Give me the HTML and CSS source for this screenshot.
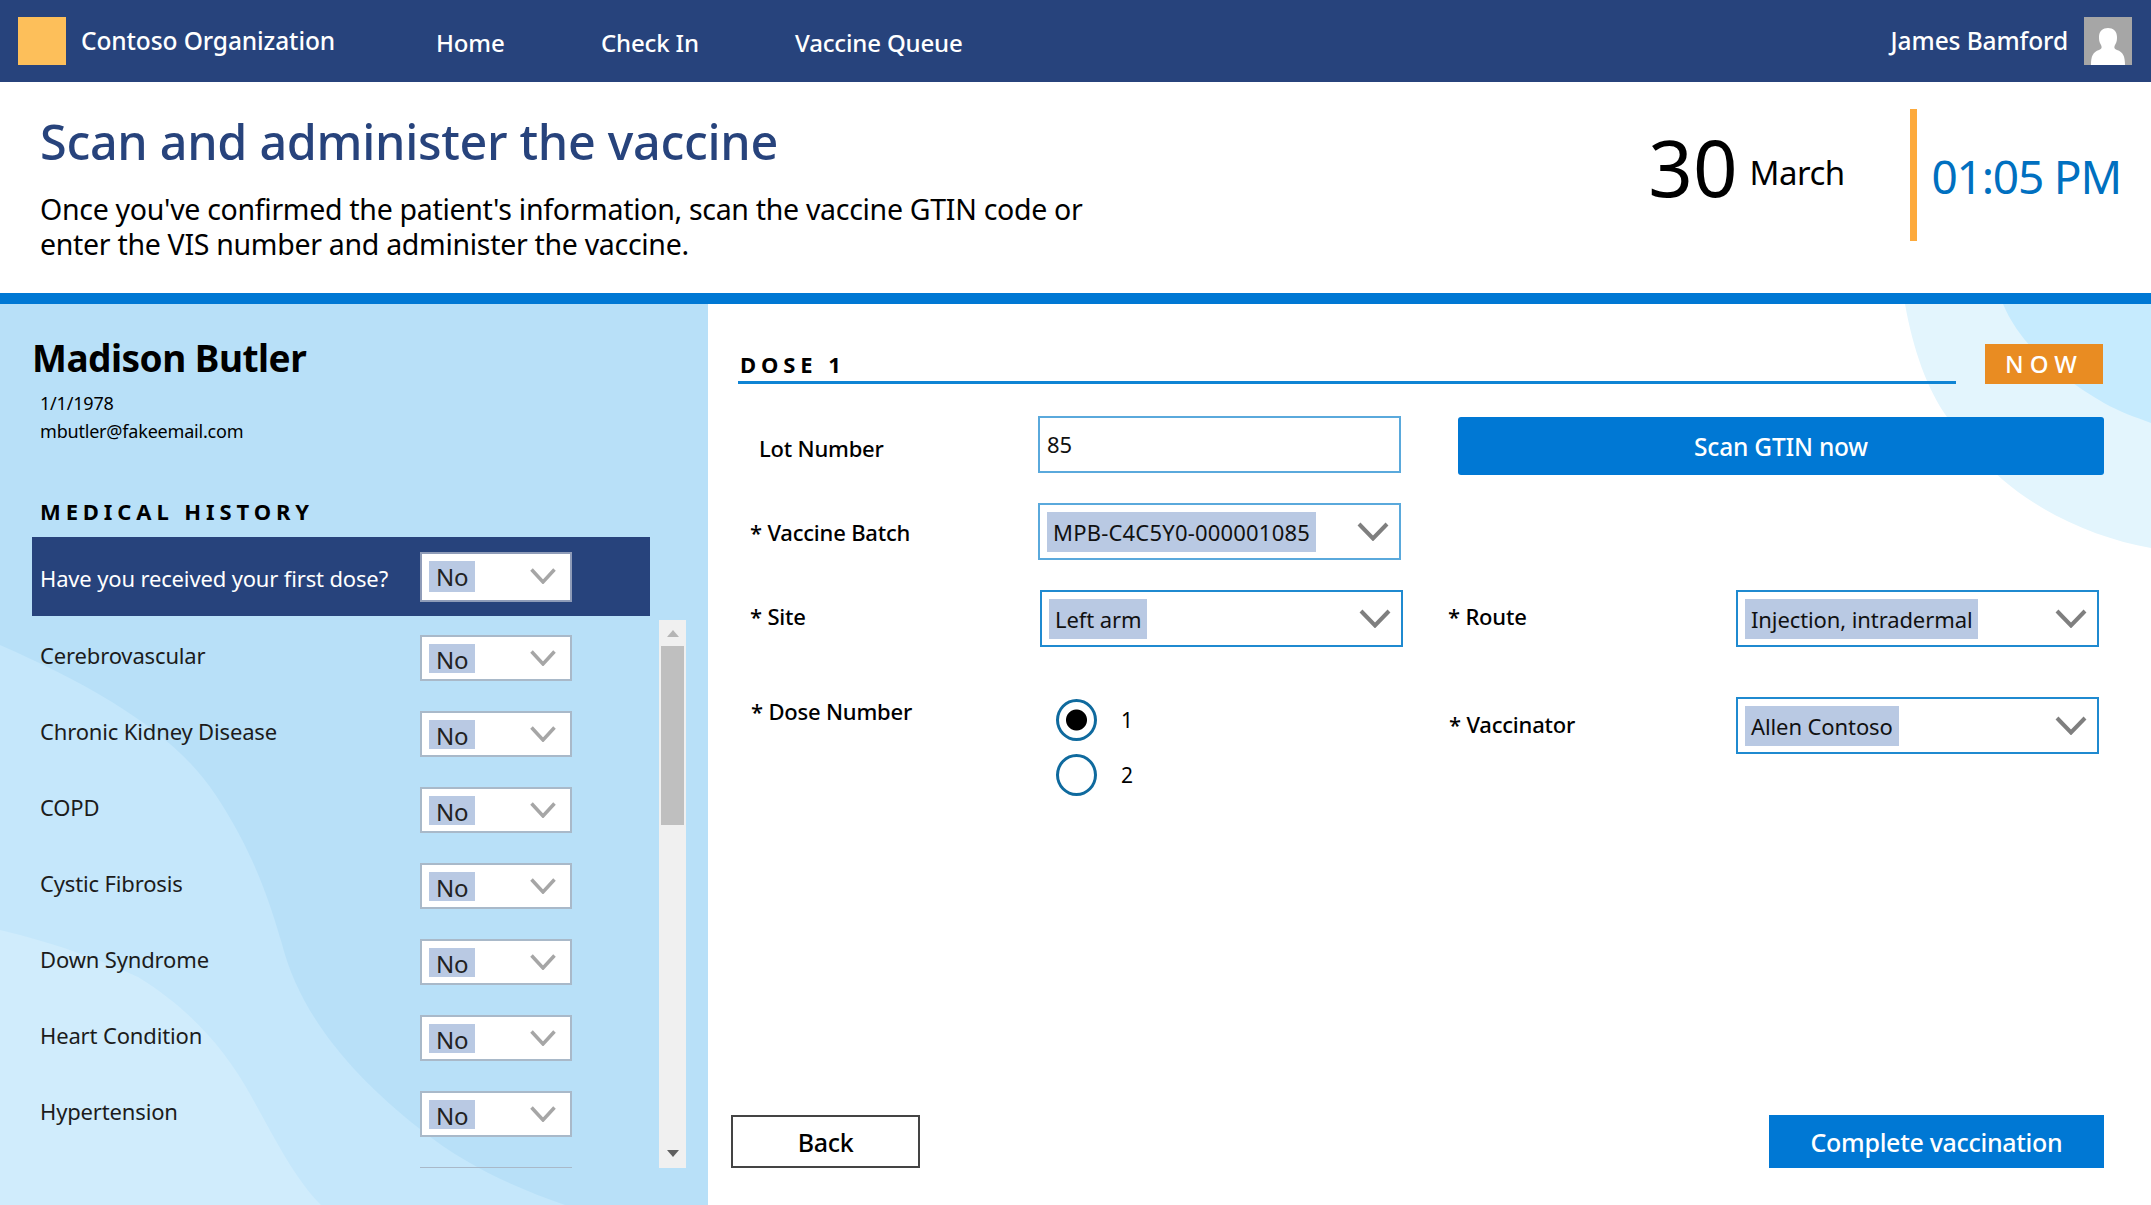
FILE: index.html
```html
<!DOCTYPE html>
<html lang="en">
<head>
  <meta charset="UTF-8">
  <title>Scan and administer the vaccine</title>
  <link rel="stylesheet" href="styles.css">
</head>
<body>
  <!-- Top navigation -->
  <nav class="topnav">
    <div class="logo"></div>
    <div class="org">Contoso Organization</div>
    <a class="navlink home">Home</a>
    <a class="navlink checkin">Check In</a>
    <a class="navlink queue">Vaccine Queue</a>
    <div class="user">James Bamford</div>
    <svg class="avatar" viewBox="0 0 48 48">
      <rect width="48" height="48" fill="#a6a6a6"/>
      <path d="M7 48c0-9 2-13 8-15 3-1 3-3 2-5-2-3-2-6-2-8 0-6 4-9 9-9s9 3 9 9c0 2 0 5-2 8-1 2-1 4 2 5 6 2 8 6 8 15z" fill="#fff"/>
    </svg>
  </nav>

  <!-- Page title -->
  <header class="pagehead">
    <div class="intro">
      <h1>Scan and administer the vaccine</h1>
      <p>Once you've confirmed the patient's information, scan the vaccine GTIN code or<br>enter the VIS number and administer the vaccine.</p>
    </div>
    <div class="when">
      <span class="day">30</span>
      <span class="month">March</span>
      <span class="divider"></span>
      <span class="time">01:05 PM</span>
    </div>
  </header>

  <div class="content">
    <!-- Patient panel -->
    <aside class="patient">
      <svg class="waves" viewBox="0 0 708 901" preserveAspectRatio="none">
        <path d="M0 341C100 385 175 430 215 490C255 550 270 600 282 640C300 710 350 770 420 825C470 865 520 885 565 901H0Z" fill="#c5e7fb"/>
        <path d="M0 626C60 640 110 660 138 673C190 705 225 745 250 790C275 835 295 875 321 901H0Z" fill="#d0ecfc"/>
      </svg>
      <div class="patient-inner">
        <h2>Madison Butler</h2>
        <div class="meta">1/1/1978</div>
        <div class="meta">mbutler@fakeemail.com</div>
        <h3>MEDICAL HISTORY</h3>

        <div class="hrow first">
          <span class="hlabel">Have you received your first dose?</span>
          <div class="mini">
            <span class="chip">No</span>
            <svg class="chev" viewBox="0 0 26 16"><polyline points="1.5,1.5 13,14 24.5,1.5"/></svg>
          </div>
        </div>

        <div class="history">
          <div class="rows" id="rows"></div>
          <div class="scrollbar">
            <span class="arrow up"></span>
            <span class="thumb"></span>
            <span class="arrow down"></span>
          </div>
        </div>
      </div>
    </aside>

    <!-- Dose form -->
    <main class="dose">
      <svg class="blobs" viewBox="0 0 246 246" preserveAspectRatio="none">
        <path d="M0 0C8 45 22 85 42 113C60 140 80 160 98 176C140 212 195 235 246 244V0Z" fill="#e3f5fd"/>
        <path d="M98 0C115 40 150 70 199 99C215 108 230 113 246 119V0Z" fill="#c6ebfe"/>
      </svg>

      <div class="dosehead">
        <div class="dosetitle">DOSE 1</div>
        <div class="now">NOW</div>
      </div>

      <form class="fields">
        <label class="flabel lot">Lot Number</label>
        <input class="lotinput" type="text" value="85">
        <button class="scan" type="button">Scan GTIN now</button>

        <label class="flabel batch">* Vaccine Batch</label>
        <div class="pick">
          <span class="tag code">MPB-C4C5Y0-000001085</span>
          <svg class="chevbig" viewBox="0 0 32 19"><polyline points="2,2 16,16.5 30,2"/></svg>
        </div>

        <label class="flabel site">* Site</label>
        <div class="pick nudged">
          <span class="tag">Left arm</span>
          <svg class="chevbig" viewBox="0 0 32 19"><polyline points="2,2 16,16.5 30,2"/></svg>
        </div>
        <label class="flabel route">* Route</label>
        <div class="pick right">
          <span class="tag">Injection, intradermal</span>
          <svg class="chevbig" viewBox="0 0 32 19"><polyline points="2,2 16,16.5 30,2"/></svg>
        </div>

        <label class="flabel number">* Dose Number</label>
        <div class="radios">
          <label class="radio"><input type="radio" name="dose" checked><span>1</span></label>
          <label class="radio"><input type="radio" name="dose"><span>2</span></label>
        </div>
        <label class="flabel vaccinator">* Vaccinator</label>
        <div class="pick right">
          <span class="tag">Allen Contoso</span>
          <svg class="chevbig" viewBox="0 0 32 19"><polyline points="2,2 16,16.5 30,2"/></svg>
        </div>
      </form>

      <div class="actions">
        <button class="btn back" type="button">Back</button>
        <button class="btn complete" type="button">Complete vaccination</button>
      </div>
    </main>
  </div>

  <script>
    const conditions = ['Cerebrovascular', 'Chronic Kidney Disease', 'COPD', 'Cystic Fibrosis',
      'Down Syndrome', 'Heart Condition', 'Hypertension'];
    const rows = document.getElementById('rows');
    conditions.forEach(name => {
      const row = document.createElement('div');
      row.className = 'hrow';
      row.innerHTML = `
        <span class="hlabel">${name}</span>
        <div class="mini">
          <span class="chip">No</span>
          <svg class="chev" viewBox="0 0 26 16"><polyline points="1.5,1.5 13,14 24.5,1.5"/></svg>
        </div>
      `;
      rows.appendChild(row);
    });
    // next row only just shows above the end of the scroll area
    const nextRow = document.createElement('div');
    nextRow.className = 'hrow';
    nextRow.innerHTML = '<span class="hlabel"></span><div class="mini"></div>';
    rows.appendChild(nextRow);
  </script>
</body>
</html>
```

FILE: styles.css
```css
* {
  box-sizing: border-box;
}
html, body {
  margin: 0;
  height: 100%;
}
body {
  font-family: "Noto Sans", "Open Sans", Arial, sans-serif;
  color: #000;
  background: #fff;
  display: flex;
  flex-direction: column;
  height: 1205px;
  overflow: hidden;
}

/* top nav */
.topnav {
  height: 82px;
  flex: none;
  background: #27437c;
  color: #fff;
  display: flex;
  align-items: center;
  padding: 0 19px 0 18px;
  font-size: 24px;
}
.logo {
  width: 48px;
  height: 48px;
  background: #fdbf5a;
  margin-right: 15px;
}
.org {
  width: 355px;
  font-size: 24.5px;
  font-weight: 500;
  letter-spacing: -0.1px;
  padding-bottom: 1px;
}
.navlink {
  font-weight: 500;
  letter-spacing: -0.15px;
  padding-top: 2px;
}
.home {
  width: 165px;
}
.checkin {
  width: 194px;
}
.user {
  margin-left: auto;
  margin-right: 16px;
  font-size: 24.5px;
  font-weight: 500;
  letter-spacing: -0.1px;
  padding-bottom: 1px;
}
.avatar {
  width: 48px;
  height: 48px;
}

/* page title */
.pagehead {
  height: 211px;
  flex: none;
  display: flex;
  justify-content: space-between;
  padding: 27px 30px 0 40px;
}
h1 {
  margin: 0;
  font-size: 48.5px;
  line-height: 64px;
  font-weight: 500;
  color: #27437c;
  letter-spacing: -0.3px;
}
.intro p {
  margin: 19px 0 0;
  font-size: 28.5px;
  line-height: 35px;
  letter-spacing: -0.3px;
}
.when {
  display: flex;
  align-items: center;
  height: 132px;
}
.day {
  font-size: 78px;
  line-height: 1;
  margin: -16px 12px 0 0;
}
.month {
  font-size: 33px;
  margin-top: -6px;
  letter-spacing: -0.5px;
  width: 160px;
}
.divider {
  width: 7px;
  height: 132px;
  background: #fdaa3c;
  margin-right: 15px;
}
.time {
  font-size: 46px;
  color: #0070c0;
  margin-top: 2px;
  letter-spacing: -1.2px;
}

.content {
  flex: 1;
  display: flex;
  border-top: 11px solid #0078d4;
  min-height: 0;
}

/* patient panel */
.patient {
  position: relative;
  width: 708px;
  flex: none;
  background: #b8e0f8;
  overflow: hidden;
}
.waves {
  position: absolute;
  left: 0;
  top: 0;
  width: 100%;
  height: 100%;
}
.patient-inner {
  position: relative;
  padding: 31px 0 0 32px;
}
h2 {
  margin: 0 0 8px;
  font-size: 37px;
  line-height: 46px;
  font-weight: 700;
  letter-spacing: -0.5px;
}
.meta {
  margin-left: 8px;
  font-size: 18px;
  line-height: 28px;
  letter-spacing: -0.2px;
}
h3 {
  margin: 54px 0 14px 8px;
  font-size: 22px;
  line-height: 24px;
  font-weight: 700;
  letter-spacing: 4.9px;
}
.hrow {
  display: flex;
  align-items: center;
  height: 46px;
  font-size: 22px;
  letter-spacing: -0.15px;
  color: #1c1c1c;
}
.hlabel {
  width: 380px;
  padding-bottom: 6px;
}
.hrow.first {
  width: 618px;
  height: 79px;
  padding-left: 8px;
  background: #27437c;
  color: #fff;
}
.hrow.first .hlabel {
  padding-bottom: 0;
  padding-top: 3px;
}
.mini {
  width: 152px;
  height: 46px;
  flex: none;
  display: flex;
  align-items: center;
  justify-content: space-between;
  padding: 0 14px 0 7px;
  background: #fff;
  border: 2px solid #a9b9c9;
}
.hrow.first .mini {
  height: 50px;
  border: 2px solid #8f9cb8;
}
.chip {
  height: 29px;
  padding: 0 7px;
  background: #b9c9e3;
  color: #222;
  font-size: 24px;
  line-height: 31px;
  letter-spacing: -0.3px;
}
.hrow.first .chip {
  height: 31px;
  line-height: 31px;
}
.chev {
  width: 26px;
  height: 16px;
  margin-top: -1px;
  fill: none;
  stroke: #a6a6a6;
  stroke-width: 3.5;
}
.history {
  display: flex;
  height: 548px;
  margin-top: 4px;
  overflow: hidden;
}
.rows {
  width: 627px;
  padding: 15px 0 0 8px;
  display: flex;
  flex-direction: column;
  gap: 30px;
}
.rows .hrow {
  flex: none;
}
.scrollbar {
  width: 27px;
  background: #f0f0f0;
  display: flex;
  flex-direction: column;
  align-items: center;
}
.arrow {
  width: 0;
  height: 0;
  border-left: 6px solid transparent;
  border-right: 6px solid transparent;
}
.arrow.up {
  border-bottom: 7px solid #b5b5b5;
  margin: 10px 0 9px;
}
.arrow.down {
  border-top: 7px solid #5f5f5f;
  margin-top: auto;
  margin-bottom: 11px;
}
.thumb {
  width: 23px;
  height: 179px;
  background: #bfbfbf;
}

/* dose form */
.dose {
  position: relative;
  flex: 1;
  display: flex;
  flex-direction: column;
  padding: 40px 47px 37px 23px;
}
.blobs {
  position: absolute;
  right: 0;
  top: 0;
  width: 246px;
  height: 246px;
}
.dosehead {
  position: relative;
  display: flex;
  margin-left: 7px;
  height: 40px;
}
.dosetitle {
  width: 1218px;
  margin-right: 29px;
  padding: 7px 0 0 2px;
  border-bottom: 3px solid #0f84d4;
  font-size: 22px;
  line-height: 26px;
  font-weight: 700;
  letter-spacing: 4.9px;
}
.now {
  width: 118px;
  background: #e98c22;
  color: #fff;
  font-size: 24px;
  line-height: 40px;
  text-align: center;
  letter-spacing: 6px;
  font-weight: 500;
}
.fields {
  position: relative;
  margin: 32px 0 0 7px;
  display: grid;
  grid-template-columns: 300px 365px 45px 288px 368px;
  grid-template-rows: 87px 87px 107px auto;
  align-items: start;
}
.flabel {
  grid-column: 1;
  font-size: 22px;
  line-height: 30px;
  letter-spacing: -0.2px;
  font-weight: 500;
  padding-left: 12px;
}
.flabel.lot {
  padding-left: 21px;
  margin-top: 17px;
}
.flabel.batch {
  margin-top: 14px;
}
.flabel.site {
  margin-top: 11px;
}
.flabel.number {
  padding-left: 13px;
  margin-top: -1px;
}
.flabel.route {
  grid-column: 4;
  padding-left: 0;
  margin-top: 11px;
}
.flabel.vaccinator {
  grid-column: 4;
  padding-left: 1px;
  margin-top: 12px;
}
.lotinput {
  grid-column: 2;
  width: 363px;
  height: 57px;
  padding: 0 0 2px 7px;
  border: 2px solid #5aa9dc;
  border-radius: 0;
  background: transparent;
  font-family: inherit;
  font-size: 22px;
  color: #111;
}
.scan {
  grid-column: 4 / 6;
  margin: 1px 0 0 10px;
  height: 58px;
  border: 0;
  border-radius: 3px;
  background: #0078d4;
  color: #fff;
  font-family: inherit;
  font-size: 24.5px;
  font-weight: 500;
  letter-spacing: -0.2px;
}
.pick {
  grid-column: 2;
  width: 363px;
  height: 57px;
  display: flex;
  align-items: center;
  justify-content: space-between;
  padding: 0 10px 0 7px;
  background: #fff;
  border: 2px solid #5aa9dc;
}
.pick.nudged {
  margin-left: 2px;
  border-color: #1f8ad0;
}
.pick.right {
  grid-column: 5;
  border-color: #1f8ad0;
}
.tag {
  height: 40px;
  padding: 0 6px;
  background: #b9c9e3;
  color: #111;
  font-size: 22px;
  line-height: 40px;
  letter-spacing: -0.1px;
}
.tag.code {
  letter-spacing: 0.2px;
}
.chevbig {
  width: 32px;
  height: 19px;
  fill: none;
  stroke: #7f7f7f;
  stroke-width: 4;
}
.radios {
  grid-column: 2;
  padding: 2px 0 0 18px;
  display: flex;
  flex-direction: column;
  gap: 13px;
}
.radio {
  display: flex;
  align-items: center;
  font-size: 21px;
  height: 42px;
}
.radio input {
  appearance: none;
  width: 41px;
  height: 42px;
  margin: 0 24px 0 0;
  border: 3px solid #0f6a9e;
  border-radius: 50%;
  background: #fff;
}
.radio input:checked {
  background: radial-gradient(circle, #000 0 10px, #fff 11px);
}
.actions {
  position: relative;
  margin-top: auto;
  display: flex;
  justify-content: space-between;
}
.btn {
  height: 53px;
  font-family: inherit;
  font-size: 25px;
  font-weight: 500;
  letter-spacing: -0.3px;
  padding-top: 2px;
}
.back {
  width: 189px;
  background: #fff;
  border: 2px solid #444;
}
.complete {
  width: 335px;
  background: #0078d4;
  border: 0;
  color: #fff;
}
```
